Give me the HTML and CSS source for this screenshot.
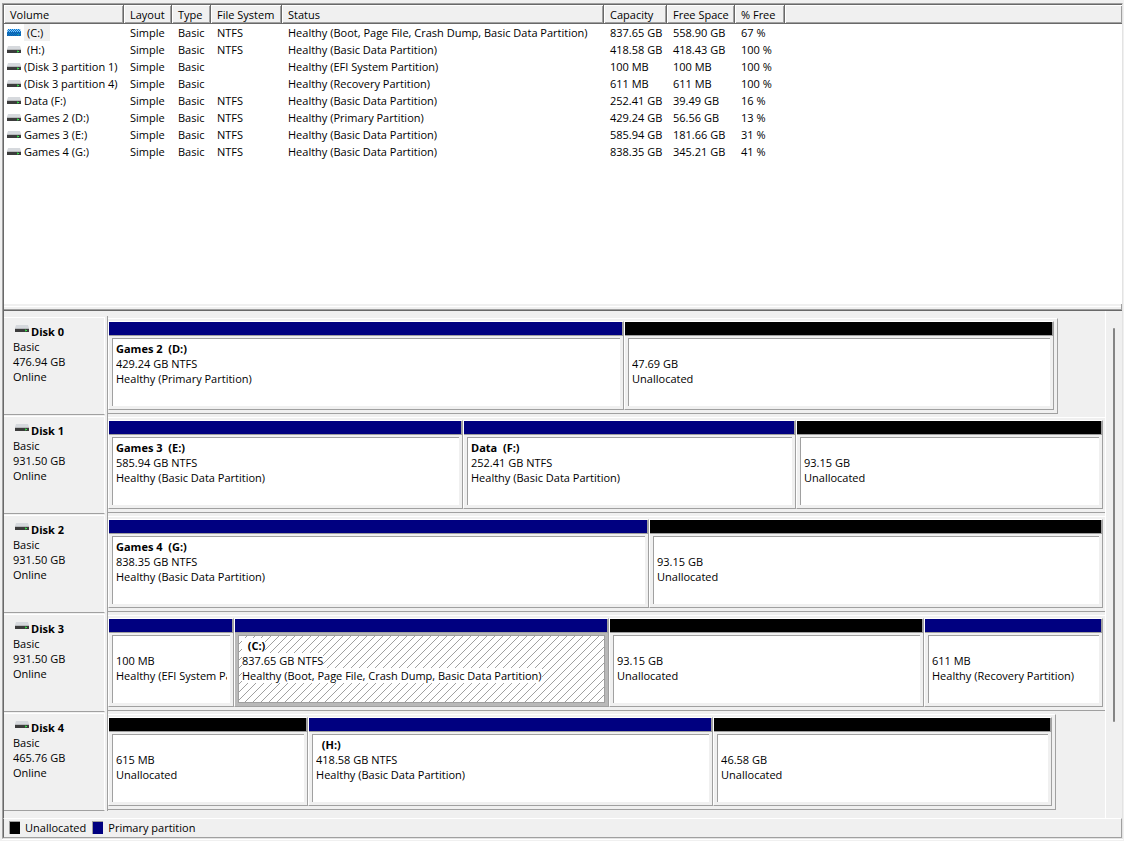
FILE: index.html
```html
<!DOCTYPE html>
<html lang="en">
<head>
<meta charset="utf-8">
<title>Disk Management</title>
<link rel="stylesheet" href="styles.css">
</head>
<body>
<svg class="defs" aria-hidden="true">
  <symbol id="drive" viewBox="0 0 14 9">
    <path d="M1 1h12l1 3H0z" fill="#d6d9dd"/>
    <path d="M0 4h14v1H0z" fill="#b8babd"/>
    <path d="M0 5h14v3H0z" fill="#3c3c3c"/>
    <path d="M10 6h2v1h-2z" fill="#3cf050"/>
    <path d="M10 5h1v3h-1z" fill="#2fb040" opacity=".6"/>
  </symbol>
  <symbol id="drive-selected" viewBox="0 0 14 9">
    <pattern id="dots" width="2" height="2" patternUnits="userSpaceOnUse">
      <path d="M0 0h1v1H0zM1 1h1v1H1z" fill="#0078d7"/>
    </pattern>
    <path d="M1 1h12l1 3H0z" fill="#8ec4ee"/>
    <path d="M0 4h14v4H0z" fill="#1c5f9c"/>
    <path d="M1 1h12l1 3v4H0V4z" fill="url(#dots)"/>
    <path d="M10 6h2v1h-2z" fill="#18a0a0"/>
  </symbol>
</svg>
<main class="window">
  <section class="volumes" aria-label="Volumes">
    <table class="list">
      <colgroup><col class="c-volume"><col class="c-layout"><col class="c-type"><col class="c-fs"><col class="c-status"><col class="c-capacity"><col class="c-space"><col class="c-percent"><col></colgroup>
      <thead>
        <tr><th>Volume</th><th>Layout</th><th>Type</th><th>File System</th><th>Status</th><th>Capacity</th><th>Free Space</th><th>% Free</th><th></th></tr>
      </thead>
      <tbody>
        <tr><td><div class="name"><svg class="drive"><use href="#drive-selected"/></svg><span class="noname current">(C:)</span></div></td><td>Simple</td><td>Basic</td><td>NTFS</td><td>Healthy (Boot, Page File, Crash Dump, Basic Data Partition)</td><td>837.65 GB</td><td>558.90 GB</td><td>67 %</td><td></td></tr>
        <tr><td><div class="name"><svg class="drive"><use href="#drive"/></svg><span class="noname">(H:)</span></div></td><td>Simple</td><td>Basic</td><td>NTFS</td><td>Healthy (Basic Data Partition)</td><td>418.58 GB</td><td>418.43 GB</td><td>100 %</td><td></td></tr>
        <tr><td><div class="name"><svg class="drive"><use href="#drive"/></svg><span>(Disk 3 partition 1)</span></div></td><td>Simple</td><td>Basic</td><td></td><td>Healthy (EFI System Partition)</td><td>100 MB</td><td>100 MB</td><td>100 %</td><td></td></tr>
        <tr><td><div class="name"><svg class="drive"><use href="#drive"/></svg><span>(Disk 3 partition 4)</span></div></td><td>Simple</td><td>Basic</td><td></td><td>Healthy (Recovery Partition)</td><td>611 MB</td><td>611 MB</td><td>100 %</td><td></td></tr>
        <tr><td><div class="name"><svg class="drive"><use href="#drive"/></svg><span>Data (F:)</span></div></td><td>Simple</td><td>Basic</td><td>NTFS</td><td>Healthy (Basic Data Partition)</td><td>252.41 GB</td><td>39.49 GB</td><td>16 %</td><td></td></tr>
        <tr><td><div class="name"><svg class="drive"><use href="#drive"/></svg><span>Games 2 (D:)</span></div></td><td>Simple</td><td>Basic</td><td>NTFS</td><td>Healthy (Primary Partition)</td><td>429.24 GB</td><td>56.56 GB</td><td>13 %</td><td></td></tr>
        <tr><td><div class="name"><svg class="drive"><use href="#drive"/></svg><span>Games 3 (E:)</span></div></td><td>Simple</td><td>Basic</td><td>NTFS</td><td>Healthy (Basic Data Partition)</td><td>585.94 GB</td><td>181.66 GB</td><td>31 %</td><td></td></tr>
        <tr><td><div class="name"><svg class="drive"><use href="#drive"/></svg><span>Games 4 (G:)</span></div></td><td>Simple</td><td>Basic</td><td>NTFS</td><td>Healthy (Basic Data Partition)</td><td>838.35 GB</td><td>345.21 GB</td><td>41 %</td><td></td></tr>
      </tbody>
    </table>
  </section>
  <div class="splitter"></div>
  <section class="graph" aria-label="Disks">
    <div class="disks">
      <article class="disk">
        <header class="label"><h2><svg class="drive"><use href="#drive"/></svg>Disk 0</h2><p>Basic</p><p>476.94 GB</p><p>Online</p></header>
        <div class="track"><div class="frame" style="width:95.3%">
          <div class="part" style="flex-grow:508"><div class="box"><b>Games 2&nbsp; (D:)</b><p>429.24 GB NTFS</p><p>Healthy (Primary Partition)</p></div></div>
          <div class="part free" style="flex-grow:422"><div class="box"><b></b><p>47.69 GB</p><p>Unallocated</p></div></div>
        </div></div>
      </article>
      <article class="disk">
        <header class="label"><h2><svg class="drive"><use href="#drive"/></svg>Disk 1</h2><p>Basic</p><p>931.50 GB</p><p>Online</p></header>
        <div class="track"><div class="frame full">
          <div class="part" style="flex-grow:347"><div class="box"><b>Games 3&nbsp; (E:)</b><p>585.94 GB NTFS</p><p>Healthy (Basic Data Partition)</p></div></div>
          <div class="part" style="flex-grow:325"><div class="box"><b>Data&nbsp; (F:)</b><p>252.41 GB NTFS</p><p>Healthy (Basic Data Partition)</p></div></div>
          <div class="part free" style="flex-grow:299"><div class="box"><b></b><p>93.15 GB</p><p>Unallocated</p></div></div>
        </div></div>
      </article>
      <article class="disk">
        <header class="label"><h2><svg class="drive"><use href="#drive"/></svg>Disk 2</h2><p>Basic</p><p>931.50 GB</p><p>Online</p></header>
        <div class="track"><div class="frame full">
          <div class="part" style="flex-grow:533"><div class="box"><b>Games 4&nbsp; (G:)</b><p>838.35 GB NTFS</p><p>Healthy (Basic Data Partition)</p></div></div>
          <div class="part free" style="flex-grow:446"><div class="box"><b></b><p>93.15 GB</p><p>Unallocated</p></div></div>
        </div></div>
      </article>
      <article class="disk">
        <header class="label"><h2><svg class="drive"><use href="#drive"/></svg>Disk 3</h2><p>Basic</p><p>931.50 GB</p><p>Online</p></header>
        <div class="track"><div class="frame full">
          <div class="part" style="flex-grow:118"><div class="box"><b></b><p>100 MB</p><p>Healthy (EFI System Partition)</p></div></div>
          <div class="part selected" style="flex-grow:367"><div class="box"><b><span>&nbsp; (C:)</span></b><p><span>837.65 GB NTFS</span></p><p><span>Healthy (Boot, Page File, Crash Dump, Basic Data Partition)</span></p></div></div>
          <div class="part free" style="flex-grow:307"><div class="box"><b></b><p>93.15 GB</p><p>Unallocated</p></div></div>
          <div class="part" style="flex-grow:171"><div class="box"><b></b><p>611 MB</p><p>Healthy (Recovery Partition)</p></div></div>
        </div></div>
      </article>
      <article class="disk">
        <header class="label"><h2><svg class="drive"><use href="#drive"/></svg>Disk 4</h2><p>Basic</p><p>465.76 GB</p><p>Online</p></header>
        <div class="track"><div class="frame" style="width:95.1%">
          <div class="part free" style="flex-grow:192"><div class="box"><b></b><p>615 MB</p><p>Unallocated</p></div></div>
          <div class="part" style="flex-grow:397"><div class="box"><b>&nbsp; (H:)</b><p>418.58 GB NTFS</p><p>Healthy (Basic Data Partition)</p></div></div>
          <div class="part free" style="flex-grow:331"><div class="box"><b></b><p>46.58 GB</p><p>Unallocated</p></div></div>
        </div></div>
      </article>
    </div>
    <div class="scrollbar"><div class="thumb"></div></div>
  </section>
  <footer class="legend">
    <span class="key"><i class="swatch unallocated"></i>Unallocated</span>
    <span class="key"><i class="swatch primary"></i>Primary partition</span>
  </footer>
</main>
</body>
</html>
```
FILE: styles.css
```css
:root {
  --face: #f0f0f0;
  --shadow: #a0a0a0;
  --dark: #696969;
  --navy: #000080;
}

*, *::before { box-sizing: border-box; }

body {
  margin: 0;
  min-height: 100vh;
  background: var(--face);
  color: #000;
  font: 11px/15px "Open Sans", "Noto Sans", sans-serif;
  display: flex;
}

h2, p { margin: 0; font-size: inherit; }

.defs { position: absolute; width: 0; height: 0; }

.drive { width: 14px; height: 9px; flex: none; }

.window {
  flex: 1;
  min-width: 0;
  margin: 3px 1px 2px 2px;
  border: 1px solid var(--shadow);
  border-right-color: #e3e3e3;
  border-bottom-color: #e3e3e3;
  box-shadow: 0 1px #fff;
  display: flex;
  flex-direction: column;
}

.volumes {
  flex: 1;
  background: #fff;
  border-top: 1px solid var(--dark);
  border-left: 1px solid var(--dark);
  overflow: hidden;
}

.list {
  width: 100%;
  table-layout: fixed;
  border-collapse: separate;
  border-spacing: 0;
}

.c-volume { width: 120px; }
.c-layout { width: 48px; }
.c-type { width: 39px; }
.c-fs { width: 71px; }
.c-status { width: 322px; }
.c-capacity { width: 63px; }
.c-space { width: 68px; }
.c-percent { width: 50px; }

.list th {
  height: 19px;
  padding: 0 0 0 6px;
  background: var(--face);
  border: 1px solid var(--dark);
  border-width: 0 1px 1px 0;
  box-shadow: inset 1px 1px #fff, inset -1px -1px var(--shadow);
  font-weight: 400;
  text-align: left;
  white-space: nowrap;
}

.list th:last-child { border-right: 0; }

.list td {
  height: 17px;
  padding: 0 0 0 6px;
  white-space: nowrap;
}

.list td:first-child { padding-left: 3px; }

.name { display: flex; align-items: center; gap: 3px; }
.noname { padding: 1px 7px 1px 3px; }
.current { background: var(--face); }

.splitter {
  height: 7px;
  background: var(--face);
  border-left: 1px solid var(--dark);
  border-bottom: 1px solid var(--dark);
  box-shadow: inset -1px -1px var(--shadow), inset 0 2px var(--face), inset 0 3px #fff;
}

.graph {
  display: flex;
  border-left: 1px solid var(--dark);
}

.disks {
  flex: 1;
  min-width: 0;
  padding: 5px 0 7px;
  border-right: 1px solid #fff;
}

.disk { display: flex; }

.label {
  width: 101px;
  margin: 1px 2px 0 0;
  padding: 6px 0 0 9px;
  border: 1px solid #fff;
  border-width: 1px 1px 1px 0;
  border-bottom-color: var(--shadow);
}

.label h2 { display: flex; gap: 2px; padding-left: 2px; font-weight: 700; }

.track {
  flex: 1;
  min-width: 0;
  padding: 2px 0 1px;
  border-left: 1px solid var(--shadow);
}

.frame {
  display: flex;
  padding: 2px 3px 3px 0;
  border: 1px solid var(--shadow);
  border-width: 1px 1px 1px 0;
  border-top-color: #fff;
}

.full { padding-right: 2px; border-right: 0; }

.part {
  flex: 1 1 0;
  min-width: 0;
  padding: 0 3px 3px;
  border: 1px solid var(--shadow);
  border-top-color: #fff;
  border-left-color: #fff;
}

.part::before {
  content: "";
  display: block;
  height: 14px;
  margin: 0 -3px 2px;
  background: var(--navy);
  border-right: 1px solid var(--shadow);
  border-bottom: 1px solid var(--shadow);
}

.free::before { background: #000; }

.box {
  padding: 2px 3px 20px;
  background: #fff;
  border: 1px solid var(--shadow);
  border-width: 1px 0 0 1px;
}

.box b { display: block; height: 15px; }
.box b, .box p { overflow: hidden; white-space: nowrap; }

.selected { background: #b9b9b9; }

.selected .box {
  border-width: 1px;
  padding: 2px 3px 19px;
  background: #fff url("data:image/svg+xml,%3Csvg xmlns='http://www.w3.org/2000/svg' width='8' height='8' shape-rendering='crispEdges'%3E%3Cpath fill='%23a0a0a0' d='M7 0h1v1H7zM6 1h1v1H6zM5 2h1v1H5zM4 3h1v1H4zM3 4h1v1H3zM2 5h1v1H2zM1 6h1v1H1zM0 7h1v1H0z'/%3E%3C/svg%3E");
}

.selected span { display: inline-block; height: 15px; vertical-align: top; background: #fff; }

.scrollbar { width: 16px; padding: 17px 7px 96px; display: flex; }
.thumb { flex: 1; background: #858585; border-radius: 1px; }

.legend {
  display: flex;
  gap: 6px;
  padding: 1px 5px 2px;
  border: 1px solid var(--shadow);
  border-top-color: #fff;
  border-left-color: var(--dark);
}

.key { display: flex; align-items: center; gap: 5px; }

.swatch {
  width: 11px;
  height: 13px;
  border: 1px solid var(--shadow);
  border-width: 1px 0 0 1px;
}

.unallocated { background: #000; }
.primary { background: var(--navy); }
```
